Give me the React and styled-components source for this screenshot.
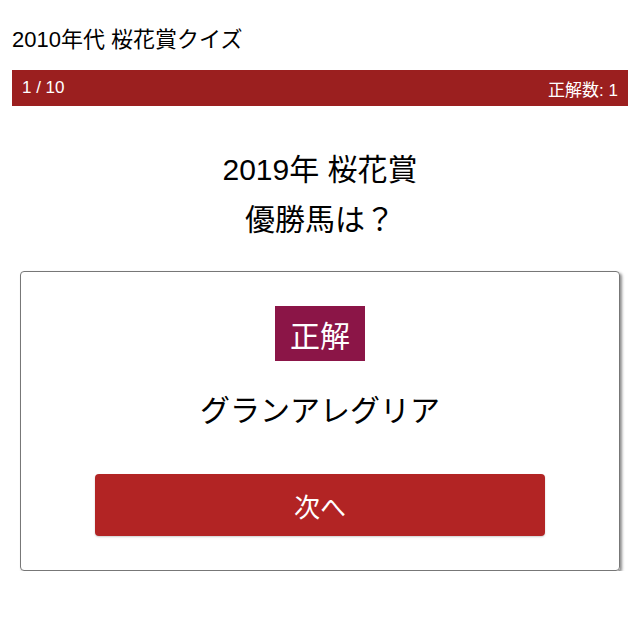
import React from 'react';
import styled, { createGlobalStyle } from 'styled-components';

const GlobalStyle = createGlobalStyle`
  body {
    margin: 0;
    background: #fff;
    font-family: "Liberation Sans", "Noto Sans CJK JP", sans-serif;
    color: #000;
  }
`;

const Page = styled.div`
  padding: 0 12px;
`;

const Title = styled.h1`
  margin: 0;
  padding: 27px 0 17px;
  font-size: 22px;
  font-weight: normal;
  line-height: 26px;
`;

const StatusBar = styled.div`
  display: flex;
  justify-content: space-between;
  align-items: center;
  height: 36px;
  padding: 0 10px;
  background: #9b1f1f;
  color: #fff;
  font-size: 17px;
`;

const Question = styled.div`
  margin-top: 39px;
  text-align: center;
  font-size: 30px;
  line-height: 50px;
`;

const Card = styled.div`
  width: 600px;
  margin: 26px auto 0;
  padding: 34px 0;
  box-sizing: border-box;
  border: 1px solid #777;
  border-radius: 4px;
  box-shadow: 2px 2px 3px rgba(0, 0, 0, 0.45);
  display: flex;
  flex-direction: column;
  align-items: center;
`;

const Badge = styled.div`
  height: 55px;
  padding: 0 15px;
  display: flex;
  align-items: center;
  background: ${props => props.correct ? '#8b1547' : '#555'};
  color: #fff;
  font-size: 30px;
`;

const Answer = styled.div`
  margin-top: 30px;
  font-size: 30px;
  line-height: 40px;
`;

const NextButton = styled.button`
  margin-top: 43px;
  width: 450px;
  height: 62px;
  border: none;
  border-radius: 4px;
  background: #b22424;
  color: #fff;
  font-family: inherit;
  font-size: 26px;
  box-shadow: 0 1px 2px rgba(0, 0, 0, 0.2);
  cursor: pointer;
`;

export default function App() {
  return (
    <Page>
      <GlobalStyle />
      <Title>2010年代 桜花賞クイズ</Title>
      <StatusBar>
        <span>1 / 10</span>
        <span>正解数: 1</span>
      </StatusBar>
      <Question>
        2019年 桜花賞
        <br />
        優勝馬は？
      </Question>
      <Card>
        <Badge correct>正解</Badge>
        <Answer>グランアレグリア</Answer>
        <NextButton>次へ</NextButton>
      </Card>
    </Page>
  );
}
